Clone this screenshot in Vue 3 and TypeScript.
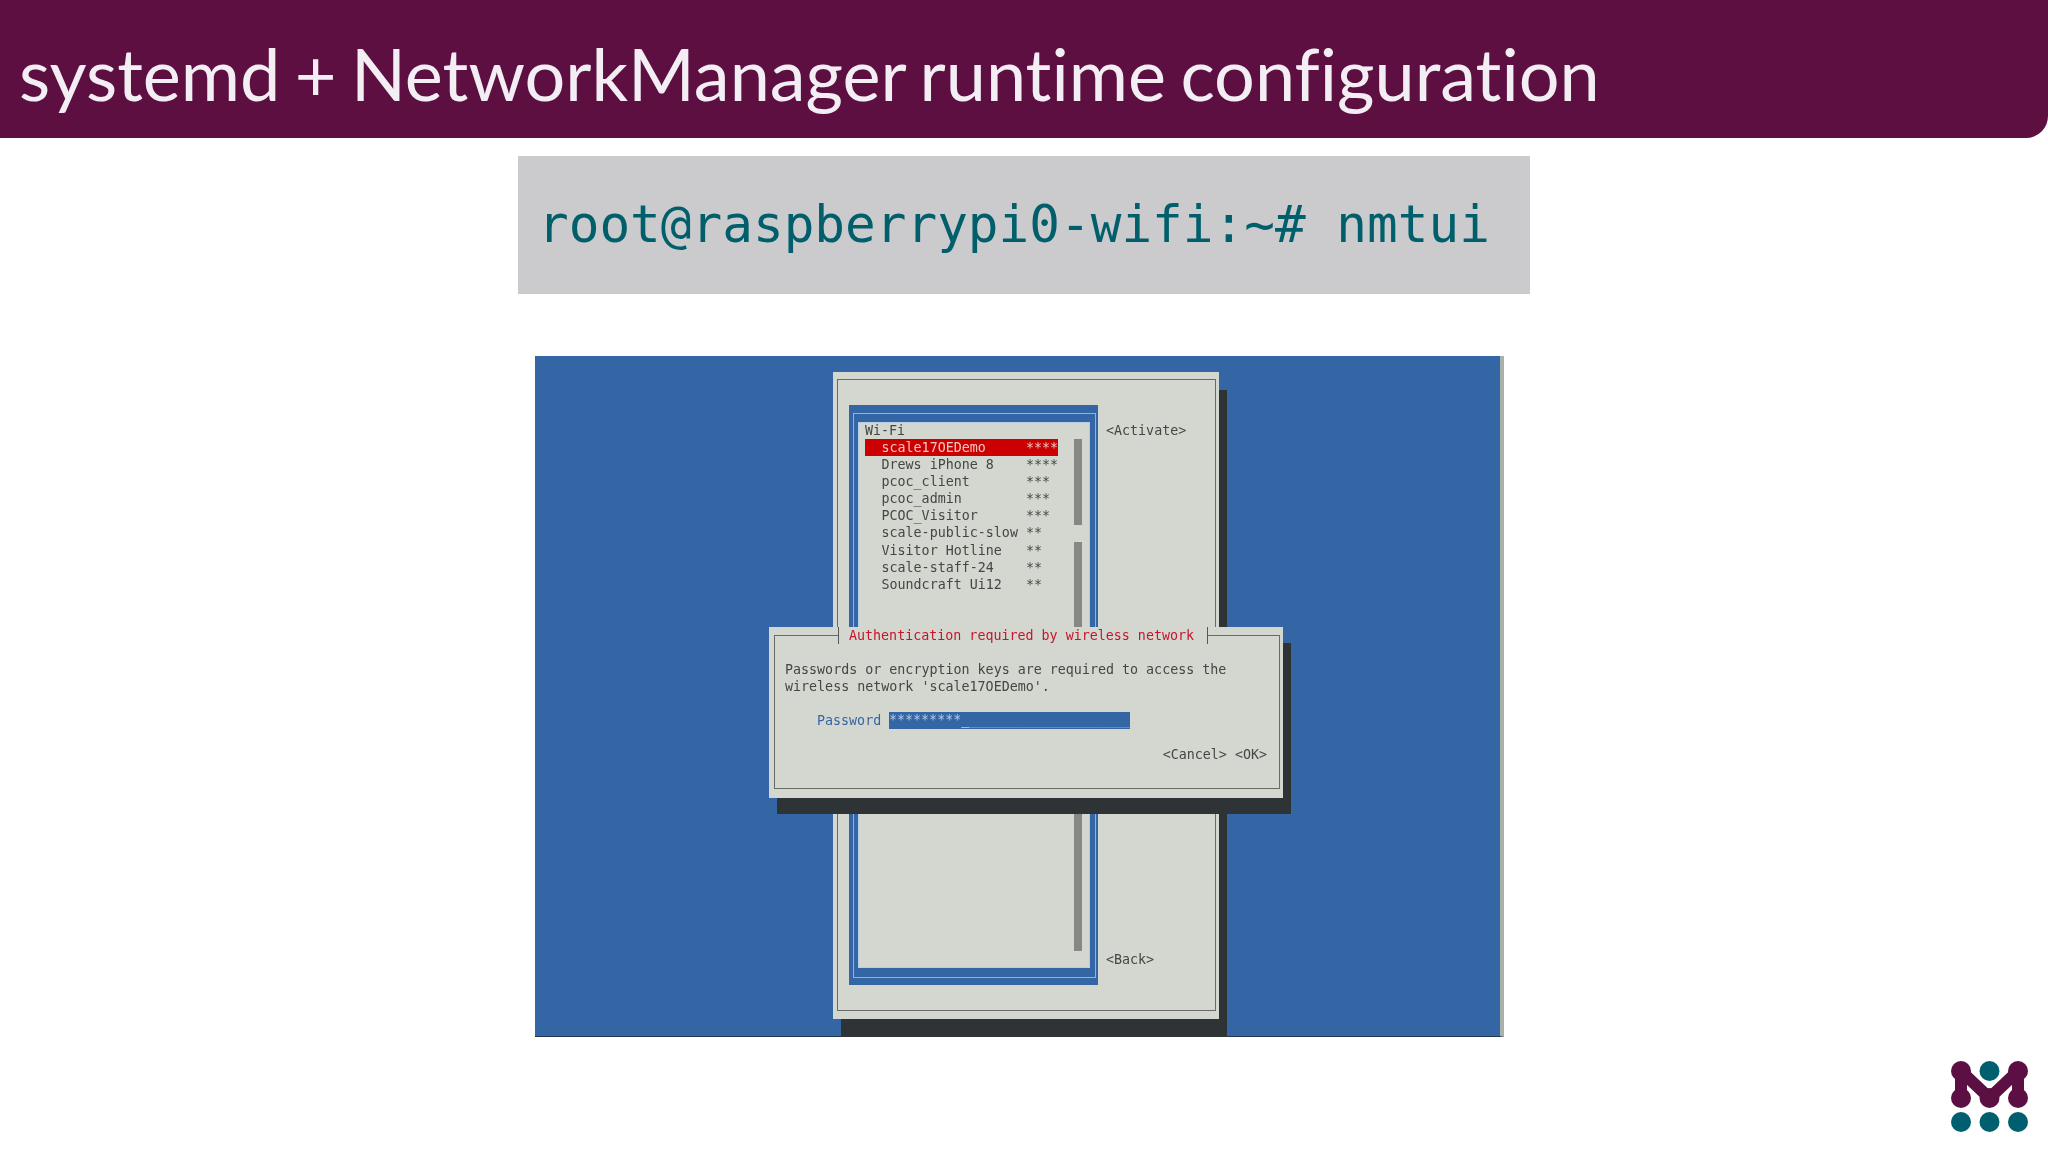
<script setup lang="ts">
interface Net { name: string; bars: string }
const networks: Net[] = [
  { name: 'scale17OEDemo', bars: '****' },
  { name: 'Drews iPhone 8', bars: '****' },
  { name: 'pcoc_client', bars: '***' },
  { name: 'pcoc_admin', bars: '***' },
  { name: 'PCOC_Visitor', bars: '***' },
  { name: 'scale-public-slow', bars: '**' },
  { name: 'Visitor Hotline', bars: '**' },
  { name: 'scale-staff-24', bars: '**' },
  { name: 'Soundcraft Ui12', bars: '**' },
]
</script>

<template>
  <div class="page">
    <header class="head"><h1>systemd + NetworkManager runtime configuration</h1></header>
    <div class="code">root@raspberrypi0-wifi:~# nmtui</div>
    <div class="term">
      <div class="win">
        <div class="frame">
          <div class="lb1">
            <div class="lb2">
              <div class="lb3">
                <div class="list">
                  <div class="cap">Wi-Fi</div>
                  <div v-for="(n, i) in networks" :key="n.name" class="row" :class="{ sel: i === 0 }">
                    <span class="nm">{{ n.name }}</span><span>{{ n.bars }}</span>
                  </div>
                </div>
                <div class="scroll">
                  <div class="thumb a"></div>
                  <div class="thumb b"></div>
                </div>
              </div>
            </div>
          </div>
          <div class="side">
            <span>&lt;Activate&gt;</span>
            <span>&lt;Back&gt;</span>
          </div>
        </div>
      </div>
      <div class="dlg">
        <div class="dframe">
          <div class="dtitle">Authentication required by wireless network</div>
          <p class="msg">Passwords or encryption keys are required to access the<br />wireless network 'scale17OEDemo'.</p>
          <div class="pw">
            <span class="pl">Password</span>
            <div class="inp"><span>*********</span><span class="cur">_</span><span class="fill">____________________</span></div>
          </div>
          <div class="btns">&lt;Cancel&gt; &lt;OK&gt;</div>
        </div>
      </div>
    </div>
    <svg class="logo" width="78" height="72" viewBox="0 0 78 72">
      <g stroke="#5c0f42" stroke-width="12" fill="none">
        <path d="M10 10V37M67 10V37M10 10L38.500 37L67 10" />
      </g>
      <g fill="#5c0f42">
        <circle cx="10" cy="10" r="10" /><circle cx="67" cy="10" r="10" />
        <circle cx="10" cy="37" r="10" /><circle cx="38.500" cy="37" r="10" /><circle cx="67" cy="37" r="10" />
      </g>
      <g fill="#005f6e">
        <circle cx="38.500" cy="10" r="10" />
        <circle cx="10" cy="61" r="10" /><circle cx="38.500" cy="61" r="10" /><circle cx="67" cy="61" r="10" />
      </g>
    </svg>
  </div>
</template>

<style scoped>
.page {
  width: 2048px;
  height: 1152px;
  background: #fff;
  display: flex;
  flex-direction: column;
  overflow: hidden;
}
.head {
  height: 138px;
  flex: none;
  box-sizing: border-box;
  background: #5c0f40;
  border-bottom-right-radius: 22px;
  padding-left: 19px;
}
.head h1 {
  margin: 0;
  padding-top: 30px;
  font: 400 72px/86px Lato, sans-serif;
  font-variant-ligatures: none;
  word-spacing: -4px;
  color: #f3eef4;
  white-space: nowrap;
}
.code {
  align-self: center;
  flex: none;
  box-sizing: border-box;
  width: 1012px;
  height: 138px;
  margin-top: 18px;
  padding-left: 20px;
  background: #cbcbcd;
  color: #005f6b;
  font: 400 51px/138px "DejaVu Sans Mono", monospace;
  white-space: pre;
}
.term {
  position: relative;
  flex: none;
  box-sizing: border-box;
  width: 969px;
  height: 681px;
  margin: 62px 0 0 535px;
  padding: 16px 0 0 298px;
  background: #3465a4;
  border-right: 4px solid #aab0aa;
  border-bottom: 1px solid #24364f;
  font: 400 13.33px/17px "DejaVu Sans Mono", monospace;
  color: #444744;
  white-space: pre;
  filter: blur(0.4px);
}
.win {
  box-sizing: border-box;
  width: 386px;
  height: 647px;
  padding: 7px 3px 8px 4px;
  background: #d3d7cf;
  box-shadow: 8px 18px 0 #2e3436;
}
.frame {
  box-sizing: border-box;
  height: 100%;
  border: 1px solid #686b65;
  padding: 25px 0 25px 11px;
  display: flex;
  gap: 8px;
}
.lb1 {
  box-sizing: border-box;
  width: 249px;
  padding: 8px 2px 7px 4px;
  background: #3465a4;
}
.lb2 {
  box-sizing: border-box;
  height: 100%;
  padding: 8px 5px 9px 4px;
  border: 1px solid #8db3de;
}
.lb3 {
  box-sizing: border-box;
  height: 100%;
  background: #d3d7cf;
  padding: 0 0 0 7px;
  display: flex;
  gap: 16px;
  box-shadow: inset 1px 1px 0 #b6cde6, inset -1px -1px 0 #b6cde6;
}
.list {
  width: 193px;
  flex: none;
}
.row {
  display: flex;
  height: 17.100px;
  padding-left: 16.500px;
}
.row.sel {
  background: #cc0000;
  color: #eec6c0;
}
.nm {
  width: 144.500px;
  flex: none;
}
.scroll {
  padding-top: 17px;
  width: 8px;
  display: flex;
  flex-direction: column;
  gap: 17px;
}
.thumb {
  background: #868884;
}
.thumb.a {
  height: 86px;
}
.thumb.b {
  height: 409px;
}
.side {
  display: flex;
  flex-direction: column;
  justify-content: space-between;
  padding: 17px 0 17px;
}
.dlg {
  position: absolute;
  left: 234px;
  top: 271px;
  box-sizing: border-box;
  width: 514px;
  height: 171px;
  padding: 8px 3px 9px 5px;
  background: #d3d7cf;
  box-shadow: 8px 16px 0 #2e3436;
}
.dframe {
  position: relative;
  box-sizing: border-box;
  height: 100%;
  border: 1px solid #686b65;
  padding: 25px 12px 0 10px;
}
.dtitle {
  position: absolute;
  left: 63px;
  top: -9px;
  box-sizing: border-box;
  width: 370px;
  height: 17px;
  padding-left: 10px;
  background: #d3d7cf;
  border-left: 1px solid #555854;
  border-right: 1px solid #555854;
  color: #c4162c;
}
.msg {
  margin: 0;
}
.pw {
  display: flex;
  margin: 17px 0 0 32px;
  height: 17px;
}
.pl {
  width: 72px;
  flex: none;
  color: #3465a4;
}
.inp {
  width: 241px;
  height: 17px;
  background: #3465a4;
  color: #b5cdea;
  line-height: 16px;
  overflow: hidden;
}
.cur {
  color: #eef3f8;
}
.fill {
  color: #87a8d4;
}
.btns {
  margin-top: 17px;
  text-align: right;
}
.logo {
  position: absolute;
  left: 1951px;
  top: 1061px;
}
</style>
